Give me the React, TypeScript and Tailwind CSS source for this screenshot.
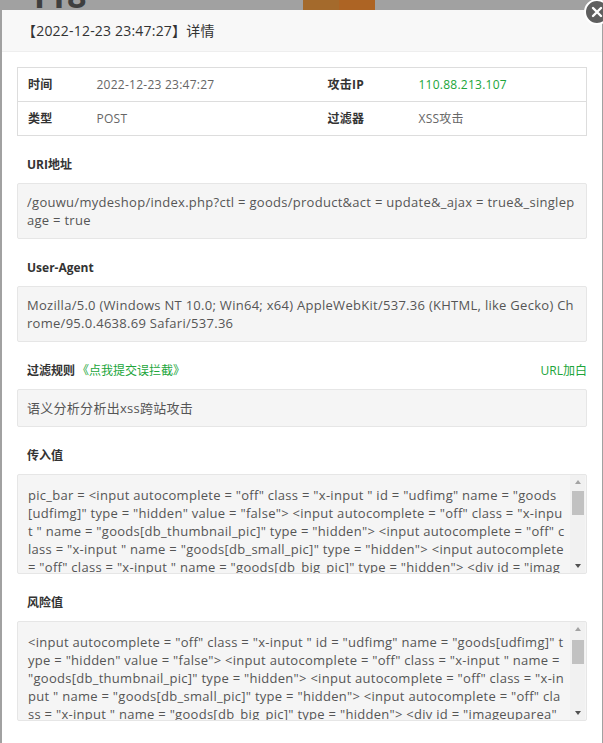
import React from "react";

const green = "text-[#20a53a]";

const inValue =
  'pic_bar = <input autocomplete = "off" class = "x-input " id = "udfimg" name = "goods[udfimg]" type = "hidden" value = "false"> <input autocomplete = "off" class = "x-input " name = "goods[db_thumbnail_pic]" type = "hidden"> <input autocomplete = "off" class = "x-input " name = "goods[db_small_pic]" type = "hidden"> <input autocomplete = "off" class = "x-input " name = "goods[db_big_pic]" type = "hidden">  <div id = "imageuparea" class = "imageuparea"> <div class = "clearfix"> <span class = "imagebox"></span></div></div>';

const riskValue =
  '<input autocomplete = "off" class = "x-input " id = "udfimg" name = "goods[udfimg]" type = "hidden" value = "false"> <input autocomplete = "off" class = "x-input " name = "goods[db_thumbnail_pic]" type = "hidden"> <input autocomplete = "off" class = "x-input " name = "goods[db_small_pic]" type = "hidden"> <input autocomplete = "off" class = "x-input " name = "goods[db_big_pic]" type = "hidden">  <div id = "imageuparea" class = "imageuparea"> <div class = "clearfix"> <span class = "imagebox"></span></div></div>';

const SectionLabel = ({ children }: { children: React.ReactNode }) => (
  <div className="pt-[19px] pb-[8px] pl-[10px] leading-[20px] text-[12px] font-bold text-[#333]">{children}</div>
);

const TextBox = ({ children }: { children: React.ReactNode }) => (
  <div className="bg-[#f5f5f5] border border-[#e6e6e6] rounded-[2px] px-[9px] py-[9px] text-[13px] leading-[18px] tracking-[0.28px] text-[#555] break-all">
    {children}
  </div>
);

// fake textarea with the classic chrome scrollbar drawn by hand
const ScrollBox = ({ text, thumbTop }: { text: string; thumbTop: number }) => (
  <div className="flex h-[100px] bg-[#f5f5f5] border border-[#e6e6e6] rounded-[2px] overflow-hidden">
    <div className="flex-1 overflow-hidden pl-[10px] pr-[4px] pt-[11px] text-[13px] leading-[18px] tracking-[0.28px] text-[#555] break-all">
      {text}
    </div>
    <div className="w-[15px] mr-[1px] flex flex-col items-center bg-[#f1f1f1]">
      <div className="h-[14px] flex items-center justify-center">
        <div className="w-0 h-0 border-l-[3px] border-r-[3px] border-b-[4px] border-l-transparent border-r-transparent border-b-[#a3a3a3]" />
      </div>
      <div className="w-[12px] h-[24px] bg-[#c1c1c1]" style={{ marginTop: thumbTop }} />
      <div className="flex-1" />
      <div className="h-[14px] flex items-center justify-center">
        <div className="w-0 h-0 border-l-[3px] border-r-[3px] border-t-[4px] border-l-transparent border-r-transparent border-t-[#505050]" />
      </div>
    </div>
  </div>
);

export default function App() {
  return (
    <div
      className="relative h-[743px] w-[603px] overflow-hidden bg-[#a1a1a1]"
      style={{ fontFamily: '"Open Sans", "Noto Sans CJK SC", sans-serif' }}
    >
      {/* page behind the shade */}
      <div className="absolute left-[28px] top-[-22px] text-[34px] font-bold text-[#3f3f3f] leading-[34px]">118</div>
      <div className="absolute left-[303px] top-0 w-[72px] h-[10px] flex">
        <div className="w-[36px] bg-[#a46a2c]" />
        <div className="w-[36px] bg-[#ad6424]" />
      </div>

      {/* dialog */}
      <div className="absolute left-[2px] top-[10px] w-[600px] h-[760px] bg-white">
        <div className="h-[42px] bg-[#f8f8f8] border-b border-[#eee] flex items-center pl-[20px] text-[14px] tracking-[0.2px] text-[#333]">
          【2022-12-23 23:47:27】详情
        </div>

        <div className="px-[15px] pt-[15px]">
          <table className="w-full table-fixed border-collapse text-[12px] tracking-[0.25px]">
            <colgroup>
              <col className="w-[79px]" />
              <col className="w-[231px]" />
              <col className="w-[91px]" />
              <col />
            </colgroup>
            <tbody>
              <tr className="h-[34px]">
                <td className="border-y border-l border-[#ddd] pl-[10px] font-bold text-[#333]">时间</td>
                <td className="border-y border-[#ddd] text-[#666]">2022-12-23 23:47:27</td>
                <td className="border-y border-[#ddd] font-bold text-[#333]">攻击IP</td>
                <td className={`border-y border-r border-[#ddd] ${green}`}>110.88.213.107</td>
              </tr>
              <tr className="h-[34px]">
                <td className="border-y border-l border-[#ddd] pl-[10px] font-bold text-[#333]">类型</td>
                <td className="border-y border-[#ddd] text-[#666]">POST</td>
                <td className="border-y border-[#ddd] font-bold text-[#333]">过滤器</td>
                <td className="border-y border-r border-[#ddd] text-[#666]">XSS攻击</td>
              </tr>
            </tbody>
          </table>

          <SectionLabel>URI地址</SectionLabel>
          <TextBox>/gouwu/mydeshop/index.php?ctl = goods/product&amp;act = update&amp;_ajax = true&amp;_singlepage = true</TextBox>

          <SectionLabel>User-Agent</SectionLabel>
          <TextBox>
            Mozilla/5.0 (Windows NT 10.0; Win64; x64) AppleWebKit/537.36 (KHTML, like Gecko) Chrome/95.0.4638.69 Safari/537.36
          </TextBox>

          <div className="flex items-center justify-between pt-[19px] pb-[8px] pl-[10px] leading-[20px] text-[12px]">
            <div>
              <span className="font-bold text-[#333]">过滤规则</span>
              <span className={`ml-[2px] ${green}`}>《点我提交误拦截》</span>
            </div>
            <span className={`text-[12px] ${green}`}>URL加白</span>
          </div>
          <TextBox>语义分析分析出xss跨站攻击</TextBox>

          <SectionLabel>传入值</SectionLabel>
          <ScrollBox text={inValue} thumbTop={2} />

          <SectionLabel>风险值</SectionLabel>
          <ScrollBox text={riskValue} thumbTop={4} />
        </div>
      </div>

      {/* close icon */}
      <div className="absolute left-[584px] top-[-1px] w-[26px] h-[26px] rounded-full bg-[#5f5f5f] border-2 border-white flex items-center justify-center">
        <svg width="12" height="12" viewBox="0 0 12 12">
          <path d="M2 2 L10 10 M10 2 L2 10" stroke="white" strokeWidth="2.4" strokeLinecap="round" />
        </svg>
      </div>
    </div>
  );
}
